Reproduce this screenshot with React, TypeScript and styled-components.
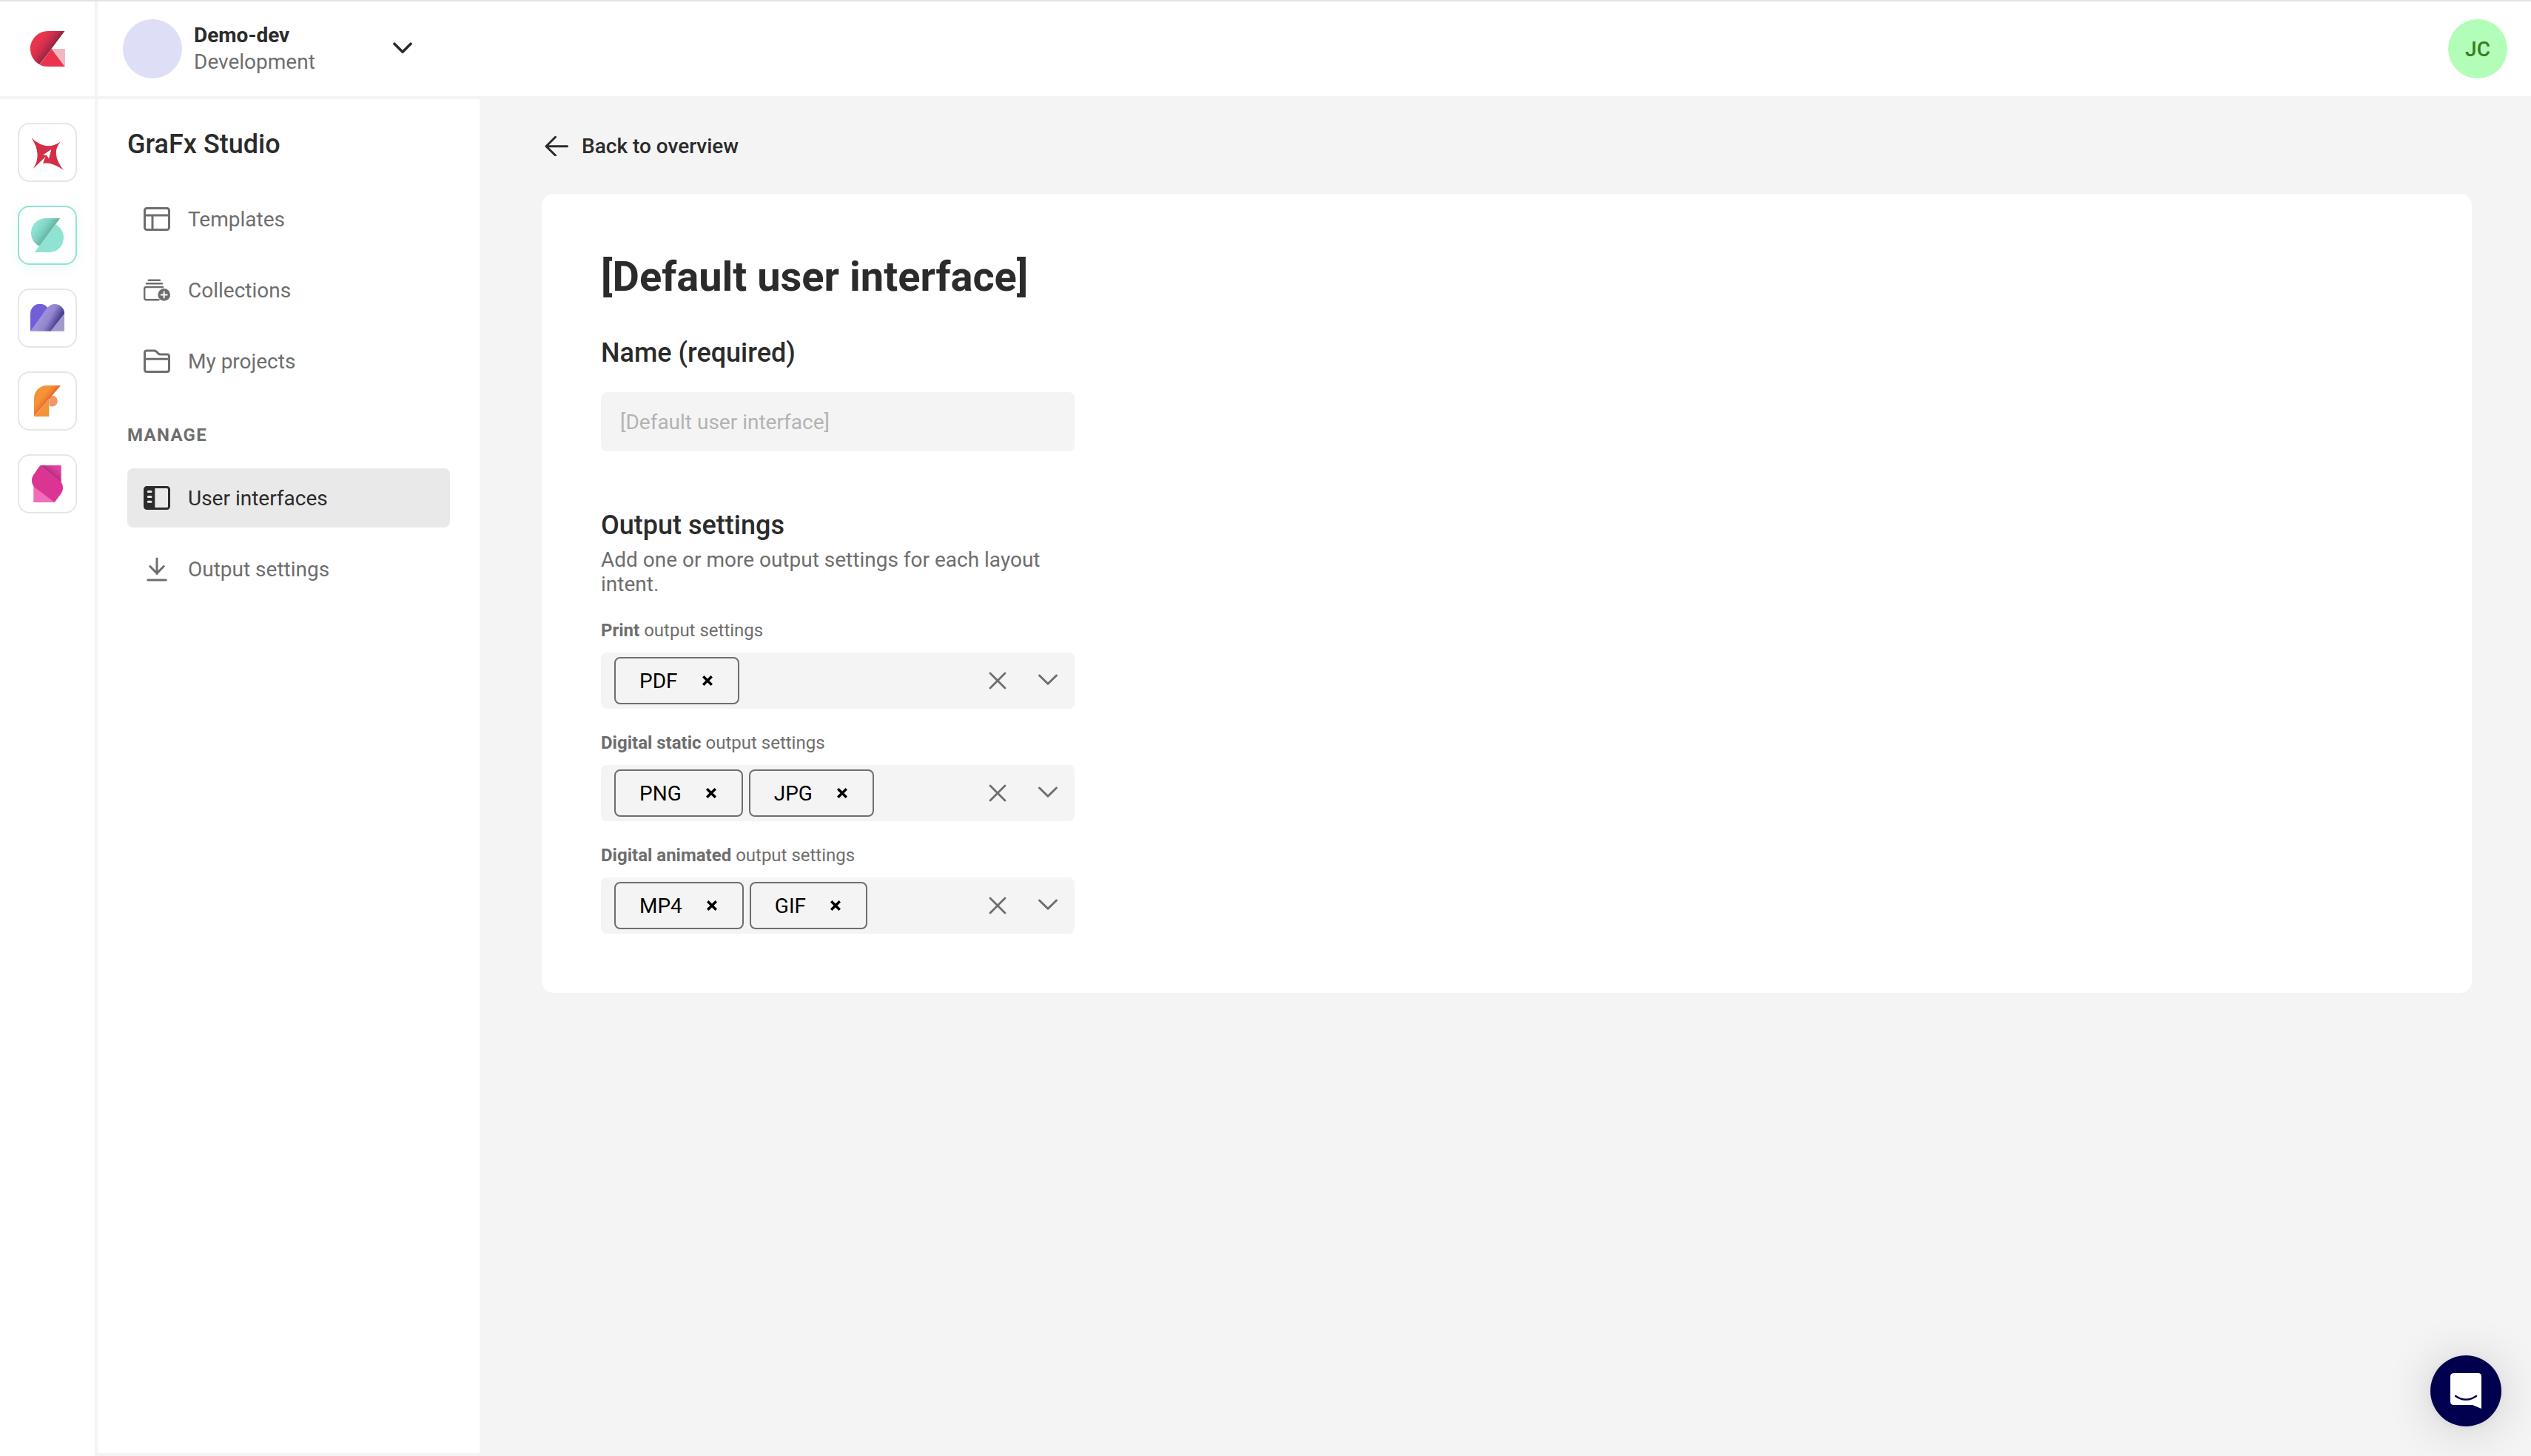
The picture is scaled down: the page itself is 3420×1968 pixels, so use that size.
import React from 'react';
import styled, { createGlobalStyle } from 'styled-components';

const color = {
  ink: '#2b2b2b',
  muted: '#6e6e6e',
  faint: '#b3b3b3',
  surface: '#f4f4f4',
  active: '#e9e9e9',
  outline: '#e6e6e6',
  teal: '#90e3d3',
};

const GlobalStyle = createGlobalStyle`
  *, *::before, *::after { box-sizing: border-box; }
  body {
    margin: 0;
    background: #fff;
    color: ${color.ink};
    font-family: Roboto, "Liberation Sans", sans-serif;
    font-size: 28px;
  }
  h1, h2, p { margin: 0; }
  button { font: inherit; color: inherit; background: none; border: 0; padding: 0; }
  svg { display: block; flex: none; }
`;

const Page = styled.div`
  display: flex;
  height: 1968px;
  border-top: 2px solid #dfe3e8;
  overflow: hidden;
`;

const Rail = styled.nav`
  display: flex;
  flex-direction: column;
  flex: none;
  width: 128px;
`;

const BrandCell = styled.div`
  display: flex;
  align-items: center;
  height: 132px;
  padding-left: 40px;
  padding-bottom: 4px;
  box-shadow: inset 0 -4px 0 ${color.surface};
`;

const Products = styled.div`
  display: flex;
  flex-direction: column;
  align-items: center;
  gap: 32px;
  padding-top: 32px;
`;

const ProductButton = styled.button<{ $active?: boolean }>`
  width: 80px;
  height: 80px;
  border-radius: 16px;
  background: #fff;
  box-shadow: inset 0 0 0 2px ${(p) => (p.$active ? color.teal : color.outline)}
    ${(p) => (p.$active ? ', 0 4px 16px rgba(144, 227, 211, 0.18)' : '')};
`;

const Body = styled.div`
  display: flex;
  flex-direction: column;
  flex: 1;
  border-left: 4px solid ${color.surface};
`;

const Header = styled.header`
  display: flex;
  align-items: center;
  justify-content: space-between;
  flex: none;
  height: 132px;
  padding: 0 32px 0 34px;
  border-bottom: 4px solid ${color.surface};
`;

const Environment = styled.button`
  display: flex;
  align-items: center;
  width: 392px;
  text-align: left;
`;

const Avatar = styled.div<{ $bg: string }>`
  display: flex;
  align-items: center;
  justify-content: center;
  flex: none;
  width: 80px;
  height: 80px;
  border-radius: 50%;
  background: ${(p) => p.$bg};
  color: #377d22;
  font-weight: 500;
`;

const EnvironmentText = styled.div`
  flex: 1;
  padding-left: 16px;
  line-height: 36px;
`;

const EnvironmentName = styled.div`
  font-weight: 700;
`;

const EnvironmentKind = styled.div`
  color: ${color.muted};
`;

const Columns = styled.div`
  display: flex;
  flex: 1;
`;

const Sidebar = styled.aside`
  flex: none;
  width: 516px;
  padding: 39px 40px 0;
  border-bottom: 4px solid ${color.surface};
`;

const SidebarTitle = styled.h2`
  margin-bottom: 39px;
  font-size: 36px;
  font-weight: 500;
  line-height: 44px;
`;

const NavList = styled.div`
  display: flex;
  flex-direction: column;
  gap: 16px;
`;

const NavItem = styled.a<{ $active?: boolean }>`
  display: flex;
  align-items: center;
  gap: 24px;
  height: 80px;
  padding-left: 22px;
  border-radius: 8px;
  background: ${(p) => (p.$active ? color.active : 'transparent')};
  color: ${(p) => (p.$active ? color.ink : color.muted)};
`;

const NavSection = styled.div`
  margin: 46px 0 31px;
  color: ${color.muted};
  font-size: 24px;
  font-weight: 700;
  letter-spacing: 1.3px;
  line-height: 28px;
`;

const Main = styled.main`
  flex: 1;
  padding: 41px 80px 0 84px;
  background: ${color.surface};
`;

const BackLink = styled.a`
  display: flex;
  align-items: center;
  gap: 18px;
  height: 44px;
  margin-bottom: 43px;
  padding-left: 4px;
  font-weight: 500;
`;

const Card = styled.section`
  padding: 80px;
  border-radius: 16px;
  background: #fff;
`;

const Form = styled.div`
  display: flex;
  flex-direction: column;
  width: 640px;
`;

const Title = styled.h1`
  font-size: 56px;
  font-weight: 700;
  line-height: 64px;
  white-space: nowrap;
`;

const SectionTitle = styled.h2<{ $top: number }>`
  margin-top: ${(p) => p.$top}px;
  font-size: 36px;
  font-weight: 500;
  line-height: 44px;
`;

const TextField = styled.div`
  display: flex;
  align-items: center;
  height: 80px;
  margin-top: 31px;
  padding-left: 26px;
  border-radius: 8px;
  background: ${color.surface};
  color: ${color.faint};
`;

const Hint = styled.p`
  margin-top: 8px;
  color: ${color.muted};
  line-height: 33px;
`;

const Field = styled.div`
  margin-top: 32px;
`;

const FieldLabel = styled.div`
  margin-bottom: 16px;
  color: ${color.muted};
  font-size: 24px;
  line-height: 28px;
`;

const Select = styled.div`
  display: flex;
  align-items: center;
  height: 76px;
  padding: 0 22px 0 18px;
  border-radius: 8px;
  background: ${color.surface};
`;

const Chips = styled.div`
  display: flex;
  flex: 1;
  gap: 8px;
`;

const Chip = styled.div`
  display: flex;
  align-items: center;
  gap: 33px;
  height: 64px;
  padding: 0 34px 0 32px;
  border: 2px solid ${color.muted};
  border-radius: 8px;
  color: #000;
`;

const SelectActions = styled.div`
  display: flex;
  align-items: center;
  gap: 42px;
  color: ${color.muted};
`;

const ChatLauncher = styled.button`
  position: fixed;
  right: 40px;
  bottom: 40px;
  width: 96px;
  height: 96px;
  border-radius: 50%;
  background: #00004f;
  box-shadow: 0 2px 12px rgba(0, 0, 0, 0.06), 0 4px 64px rgba(0, 0, 0, 0.16);
`;

const BrandMark = () => (
  <svg width="48" height="48" viewBox="0 0 48 48">
    <defs>
      <linearGradient id="brand" gradientUnits="userSpaceOnUse" x1="9" y1="9" x2="31" y2="25">
        <stop offset="0.2" stopColor="#ea344f" />
        <stop offset="0.55" stopColor="#cf2f4b" />
        <stop offset="1" stopColor="#8c2342" />
      </linearGradient>
    </defs>
    <path d="M29.6 24H48v24z" fill="#f0b8c1" />
    <path d="M29.6 24 47.6 48H24q-6 0-10.2-2.6z" fill="#ea344f" />
    <path d="M24 0H47.4L13.6 45.2A24 24 0 0 1 24 0z" fill="url(#brand)" />
  </svg>
);

const StarMark = () => (
  <svg width="80" height="80" viewBox="0 0 80 80">
    <path
      d="M18.6 20.6Q39 39.5 58 25.2 44 41 61.8 64 47.5 53 34 54.7L37.4 46 20.8 62Q33.5 43.5 18.6 20.6z"
      fill="#d32f47"
    />
    <path d="M45.3 36 34.3 43.3 39.2 43.9 42 48.4z" fill="#fff" />
  </svg>
);

const StudioMark = () => (
  <svg width="80" height="80" viewBox="0 0 80 80">
    <defs>
      <linearGradient id="studio" gradientUnits="userSpaceOnUse" x1="27" y1="25" x2="44" y2="37">
        <stop offset="0" stopColor="#90e3d3" />
        <stop offset="0.5" stopColor="#7fd0bf" />
        <stop offset="1" stopColor="#5db3a0" />
      </linearGradient>
    </defs>
    <path d="M51 25.4C57.5 28.5 62 35 62 43.3 62 54.5 53.5 63 43 63H22.7z" fill="#90e3d3" />
    <path d="M38 17H57.2L29.2 54.6C22.5 51.5 18 45 18 37 18 25.5 27 17 38 17z" fill="url(#studio)" />
  </svg>
);

const MediaMark = () => (
  <svg width="80" height="80" viewBox="0 0 80 80">
    <defs>
      <linearGradient id="media" gradientUnits="userSpaceOnUse" x1="34" y1="34" x2="55" y2="46">
        <stop offset="0" stopColor="#a092d9" />
        <stop offset="0.45" stopColor="#9385cc" />
        <stop offset="1" stopColor="#41378a" />
      </linearGradient>
    </defs>
    <path d="M17 57.7V34a13 13 0 0 1 23.5-8L42 30z" fill="#705fd6" />
    <path d="M63 32V57.7H44z" fill="#a19bc9" />
    <path d="M17 57.7 39.5 26.5C43 22.5 46 21 50 21 57 21 63 26.5 63 33.5L44.3 57.7z" fill="url(#media)" />
  </svg>
);

const FrescoMark = () => (
  <svg width="80" height="80" viewBox="0 0 80 80">
    <defs>
      <linearGradient id="fresco" gradientUnits="userSpaceOnUse" x1="35" y1="32" x2="45" y2="40">
        <stop offset="0" stopColor="#f29437" />
        <stop offset="0.5" stopColor="#ee7a31" />
        <stop offset="0.8" stopColor="#e8502a" />
      </linearGradient>
    </defs>
    <path d="M42.5 34A7.3 7.3 0 1 1 42.5 46.2z" fill="#f2966a" />
    <path d="M22.4 61 42.3 37.6V61z" fill="#f29437" />
    <path d="M22 61V37C22 26.5 29.5 19 40 19H58L42.3 37.2z" fill="url(#fresco)" />
  </svg>
);

const ShapeMark = () => (
  <svg width="80" height="80" viewBox="0 0 80 80">
    <defs>
      <linearGradient id="shape" gradientUnits="userSpaceOnUse" x1="51" y1="17" x2="43" y2="27">
        <stop offset="0" stopColor="#e040a0" />
        <stop offset="0.5" stopColor="#cc3890" />
        <stop offset="1" stopColor="#a82c78" />
      </linearGradient>
    </defs>
    <path d="M30 15H58.7V38z" fill="url(#shape)" />
    <path d="M21.3 42V65H50z" fill="#ef6dbb" />
    <path
      d="M30.2 15 58 36.5C61.5 41.5 62 47 59 52.5L49.7 65 22.5 44.5C18 39 17.8 33 21.5 27.5z"
      fill="#da3593"
    />
  </svg>
);

const strokeProps = {
  fill: 'none',
  stroke: 'currentColor',
  strokeWidth: 3,
  strokeLinecap: 'round' as const,
  strokeLinejoin: 'round' as const,
};

const TemplatesIcon = () => (
  <svg width="36" height="36" viewBox="0 0 36 36" {...strokeProps}>
    <rect x="1.5" y="3.5" width="33" height="29" rx="3" />
    <path d="M1.5 13h33M12 13v19.5" />
  </svg>
);

const CollectionsIcon = () => (
  <svg width="36" height="36" viewBox="0 0 36 36" {...strokeProps} strokeWidth={2.4}>
    <path d="M6.7 4.7h15.2M3.9 9.3h21M20.5 31.2H3.7q-2.5 0-2.5-2.5V16.5q0-2.5 2.5-2.5H26" />
    <circle cx="27.7" cy="24.4" r="8.3" fill="currentColor" stroke="none" />
    <path d="M27.7 20.4v8M23.7 24.4h8" stroke="#fff" strokeWidth="2" />
  </svg>
);

const FolderIcon = () => (
  <svg width="36" height="36" viewBox="0 0 36 36" {...strokeProps}>
    <path d="M1.5 29.5V6.8q0-2.8 2.8-2.8h10.2q1.5 0 2.5 1l3.3 3.2q.8.8 2.2.8h9.2q2.8 0 2.8 2.8v17.7q0 3-3 3h-27q-3 0-3-3zM1.5 15.3h33" />
  </svg>
);

const PanelsIcon = () => (
  <svg width="36" height="36" viewBox="0 0 36 36" {...strokeProps}>
    <rect x="1.5" y="3.5" width="33" height="29" rx="3" />
    <path d="M3 4h12.3v28H3z" fill="currentColor" stroke="none" />
    <path d="M6.3 9.5h3.7M6.3 16.4h3.7M6.3 23.2h3.7" stroke={color.active} />
  </svg>
);

const DownloadIcon = () => (
  <svg width="36" height="36" viewBox="0 0 36 36" {...strokeProps}>
    <path d="M18 4v20.5M8.8 14.5 18 24l9.2-9.5M5.8 33h24.5" />
  </svg>
);

const ArrowLeft = () => (
  <svg width="32" height="28" viewBox="0 0 32 28" {...strokeProps}>
    <path d="M30.5 14.8H2M14.5 2.3 2 14.8 14.5 27" />
  </svg>
);

const HeaderChevron = () => (
  <svg width="28" height="18" viewBox="0 0 28 18" {...strokeProps} strokeWidth={3.6}>
    <path d="M3 2.200 14 13.200 25 2.200" />
  </svg>
);

const SelectChevron = () => (
  <svg width="28" height="24" viewBox="0 0 28 24" {...strokeProps}>
    <path d="M2.5 5 14 16.2 25.5 5" />
  </svg>
);

const ClearIcon = () => (
  <svg width="24" height="24" viewBox="0 0 24 24" {...strokeProps} strokeWidth={2.8}>
    <path d="M2 2 22 22M22 2 2 22" />
  </svg>
);

const ChipRemove = () => (
  <svg width="14" height="16" viewBox="0 0 14 16" {...strokeProps} strokeWidth={3.6} strokeLinecap="butt">
    <path d="M1.2 2.2 12.8 13.8M12.8 2.2 1.2 13.8" />
  </svg>
);

const ChatIcon = () => (
  <svg width="96" height="96" viewBox="0 0 96 96">
    <path d="M32 24H64.5Q69 24 69 28.5V72L57 67H32Q27 67 27 62.5V28.5Q27 24 32 24z" fill="#fff" />
    <path d="M34.2 55Q48 64.5 62 55" fill="none" stroke="#00004f" strokeWidth="2.6" strokeLinecap="round" />
  </svg>
);

const products = [
  { name: 'genie', Mark: StarMark },
  { name: 'studio', Mark: StudioMark, active: true },
  { name: 'media', Mark: MediaMark },
  { name: 'fresco', Mark: FrescoMark },
  { name: 'shape', Mark: ShapeMark },
];

const mainNav = [
  { label: 'Templates', Icon: TemplatesIcon },
  { label: 'Collections', Icon: CollectionsIcon },
  { label: 'My projects', Icon: FolderIcon },
];

const manageNav = [
  { label: 'User interfaces', Icon: PanelsIcon, active: true },
  { label: 'Output settings', Icon: DownloadIcon },
];

const outputs = [
  { intent: 'Print', formats: ['PDF'] },
  { intent: 'Digital static', formats: ['PNG', 'JPG'] },
  { intent: 'Digital animated', formats: ['MP4', 'GIF'] },
];

export default function App() {
  return (
    <>
      <GlobalStyle />
      <Page>
        <Rail>
          <BrandCell>
            <BrandMark />
          </BrandCell>
          <Products>
            {products.map(({ name, Mark, active }) => (
              <ProductButton key={name} $active={active}>
                <Mark />
              </ProductButton>
            ))}
          </Products>
        </Rail>
        <Body>
          <Header>
            <Environment>
              <Avatar $bg="#dedef6" />
              <EnvironmentText>
                <EnvironmentName>Demo-dev</EnvironmentName>
                <EnvironmentKind>Development</EnvironmentKind>
              </EnvironmentText>
              <HeaderChevron />
            </Environment>
            <Avatar $bg="#b2fdb7">JC</Avatar>
          </Header>
          <Columns>
            <Sidebar>
              <SidebarTitle>GraFx Studio</SidebarTitle>
              <NavList>
                {mainNav.map(({ label, Icon }) => (
                  <NavItem key={label}>
                    <Icon />
                    {label}
                  </NavItem>
                ))}
              </NavList>
              <NavSection>MANAGE</NavSection>
              <NavList>
                {manageNav.map(({ label, Icon, active }) => (
                  <NavItem key={label} $active={active}>
                    <Icon />
                    {label}
                  </NavItem>
                ))}
              </NavList>
            </Sidebar>
            <Main>
              <BackLink>
                <ArrowLeft />
                Back to overview
              </BackLink>
              <Card>
                <Form>
                  <Title>[Default user interface]</Title>
                  <SectionTitle $top={49}>Name (required)</SectionTitle>
                  <TextField>[Default user interface]</TextField>
                  <SectionTitle $top={78}>Output settings</SectionTitle>
                  <Hint>Add one or more output settings for each layout intent.</Hint>
                  {outputs.map(({ intent, formats }) => (
                    <Field key={intent}>
                      <FieldLabel>
                        <b>{intent}</b> output settings
                      </FieldLabel>
                      <Select>
                        <Chips>
                          {formats.map((format) => (
                            <Chip key={format}>
                              {format}
                              <ChipRemove />
                            </Chip>
                          ))}
                        </Chips>
                        <SelectActions>
                          <ClearIcon />
                          <SelectChevron />
                        </SelectActions>
                      </Select>
                    </Field>
                  ))}
                </Form>
              </Card>
            </Main>
          </Columns>
        </Body>
      </Page>
      <ChatLauncher>
        <ChatIcon />
      </ChatLauncher>
    </>
  );
}
